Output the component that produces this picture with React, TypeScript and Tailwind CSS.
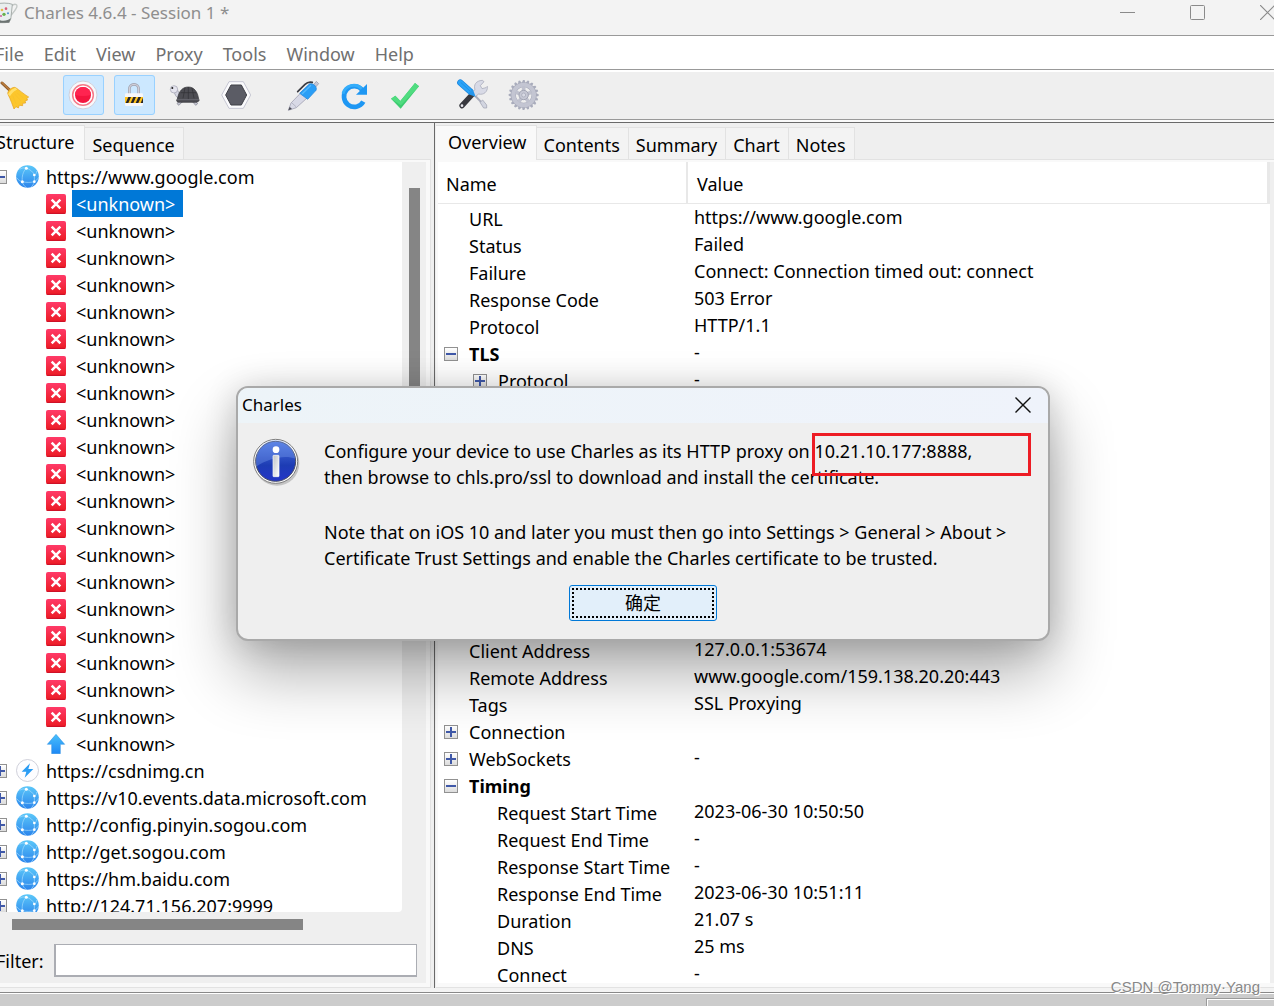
import { useState } from "react";
import type { ReactNode } from "react";
import clsx from "clsx";

const MENUS = ["File", "Edit", "View", "Proxy", "Tools", "Window", "Help"];

const HOSTS = [
  { url: "https://csdnimg.cn", icon: "bolt" },
  { url: "https://v10.events.data.microsoft.com", icon: "globe" },
  { url: "http://config.pinyin.sogou.com", icon: "globe" },
  { url: "http://get.sogou.com", icon: "globe" },
  { url: "https://hm.baidu.com", icon: "globe" },
  { url: "http://124.71.156.207:9999", icon: "globe" },
];

type Row = { name: string; value?: string; depth?: number; state?: "open" | "closed" };

const REQUEST_ROWS: Row[] = [
  { name: "URL", value: "https://www.google.com" },
  { name: "Status", value: "Failed" },
  { name: "Failure", value: "Connect: Connection timed out: connect" },
  { name: "Response Code", value: "503 Error" },
  { name: "Protocol", value: "HTTP/1.1" },
  { name: "TLS", value: "-", state: "open" },
  { name: "Protocol", value: "-", depth: 1, state: "closed" },
];

const CONNECTION_ROWS: Row[] = [
  { name: "Client Address", value: "127.0.0.1:53674" },
  { name: "Remote Address", value: "www.google.com/159.138.20.20:443" },
  { name: "Tags", value: "SSL Proxying" },
  { name: "Connection", state: "closed" },
  { name: "WebSockets", value: "-", state: "closed" },
  { name: "Timing", state: "open" },
  { name: "Request Start Time", value: "2023-06-30 10:50:50", depth: 1 },
  { name: "Request End Time", value: "-", depth: 1 },
  { name: "Response Start Time", value: "-", depth: 1 },
  { name: "Response End Time", value: "2023-06-30 10:51:11", depth: 1 },
  { name: "Duration", value: "21.07 s", depth: 1 },
  { name: "DNS", value: "25 ms", depth: 1 },
  { name: "Connect", value: "-", depth: 1 },
];

/* ---------- tree icons ---------- */

function Expander({ open }: { open?: boolean }) {
  return (
    <button
      aria-label={open ? "Collapse" : "Expand"}
      className="relative h-3.5 w-3.5 shrink-0 border border-[#919191] bg-gradient-to-b from-white to-[#dcdcdc]"
    >
      <svg viewBox="0 0 12 12" className="h-3 w-3" shapeRendering="crispEdges">
        <rect x="1" y="5" width="10" height="2" fill="#3f58a8" />
        {!open && <rect x="5" y="1" width="2" height="10" fill="#3f58a8" />}
      </svg>
    </button>
  );
}

function Globe() {
  return (
    <svg viewBox="0 0 69 69" className="h-[23px] w-[23px] shrink-0">
      <defs>
        <linearGradient id="globe" x1="0" y1="0" x2="0" y2="1">
          <stop offset="0" stopColor="#5cc8f9" />
          <stop offset="1" stopColor="#2b84ec" />
        </linearGradient>
      </defs>
      <circle cx="34.5" cy="34.5" r="34" fill="url(#globe)" />
      <g fill="none" stroke="#a9defc" strokeWidth="2">
        <path d="M31 9C21 20 17 34 19 50" />
        <path d="M31 9C42 13 52 21 55 30V50C53 58 49 63 44 67" />
        <path d="M19 50C30 53 44 53 55 50C60 47 65 43 68 37" />
        <path d="M19 50C12 48 6 44 2 38M19 50C21 58 26 65 32 68" />
        <path d="M31 9C24 8 16 9 11 13M55 30C60 27 62 24 62 18" />
      </g>
      <g fill="#fff">
        <circle cx="31" cy="10" r="4.5" />
        <circle cx="19" cy="50" r="4.5" />
        <circle cx="55" cy="30" r="4" />
        <circle cx="55" cy="50" r="4" />
      </g>
    </svg>
  );
}

function Bolt() {
  return (
    <svg viewBox="0 0 69 69" className="h-[23px] w-[23px] shrink-0">
      <circle cx="34.5" cy="34.5" r="33" fill="#fdfdff" stroke="#c6c8d2" strokeWidth="2.5" />
      <path d="M42 13L17 38H31L26 56L52 30H37Z" fill="#2b9df4" />
    </svg>
  );
}

function Failed() {
  return (
    <svg viewBox="0 0 60 60" className="h-5 w-5 shrink-0">
      <defs>
        <linearGradient id="failed" x1="0" y1="0" x2="0" y2="1">
          <stop offset="0" stopColor="#ff3a68" />
          <stop offset="1" stopColor="#ec1c24" />
        </linearGradient>
      </defs>
      <rect width="60" height="60" rx="6" fill="url(#failed)" />
      <path d="M2 58H58" stroke="#c8102a" strokeWidth="3" />
      <path d="M17 17L43 43M43 17L17 43" stroke="#fff" strokeWidth="7.5" />
    </svg>
  );
}

function Upload() {
  return (
    <svg viewBox="0 0 60 60" className="h-5 w-5 shrink-0">
      <defs>
        <linearGradient id="upload" x1="0" y1="0" x2="0" y2="1">
          <stop offset="0" stopColor="#49c0fb" />
          <stop offset="1" stopColor="#1e88f5" />
        </linearGradient>
      </defs>
      <path d="M30 1L56 31H43V59H17V31H4Z" fill="url(#upload)" stroke="#2a8fe0" strokeWidth="1.5" />
    </svg>
  );
}

/* ---------- toolbar icons, drawn on a 123 x 120 board ---------- */

function ToolIcon({ children }: { children: ReactNode }) {
  return (
    <svg viewBox="0 0 123 120" className="h-full w-full">
      {children}
    </svg>
  );
}

function ToolButton({ label, active, spaced, children }: { label: string; active?: boolean; spaced?: boolean; children: ReactNode }) {
  return (
    <button
      title={label}
      aria-label={label}
      className={clsx(
        "h-10 w-[41px] shrink-0 rounded-[3px]",
        active && "bg-[#cce8ff] outline outline-1 -outline-offset-1 outline-[#99d1ff]",
        spaced && "ml-4"
      )}
    >
      <ToolIcon>{children}</ToolIcon>
    </button>
  );
}

const GEAR_TEETH = Array.from({ length: 20 }, (_, i) => i * 18);

function Toolbar() {
  return (
    <div className="-ml-1 flex h-[47px] items-start gap-2.5 pt-[3px]" role="toolbar">
      <ToolButton label="Clear">
        <path d="M18 24L46 50" stroke="#8a5a2b" strokeWidth="9" strokeLinecap="round" />
        <path d="M18 23L46 49" stroke="#b87a3c" strokeWidth="5" strokeLinecap="round" />
        <path d="M36 58C31 50 50 33 59 38C69 44 84 58 98 66L92 71L95 75L87 78L89 84L80 85L80 92L70 91L67 99L60 95L54 102C50 92 44 74 36 58Z" fill="#fcc62c" stroke="#e5a01b" strokeWidth="2" />
        <path d="M36 58C40 49 50 40 59 38L64 44C56 46 46 55 42 64Z" fill="#ffdf6b" />
        <path d="M50 62L60 86M57 58L75 78M63 54L82 69" stroke="#f4ba2a" strokeWidth="1" />
      </ToolButton>
      <ToolButton label="Stop Recording" active spaced>
        <circle cx="60" cy="60" r="42" fill="#f8f8fb" stroke="#cfd0dc" strokeWidth="3" />
        <circle cx="60" cy="60" r="31" fill="#fff" stroke="#f57a88" strokeWidth="4.5" />
        <circle cx="60" cy="60" r="24" fill="#f4153f" />
        <path d="M60 36a24 24 0 0 1 24 24a90 90 0 0 1-48 0a24 24 0 0 1 24-24Z" fill="#ff2450" />
      </ToolButton>
      <ToolButton label="Stop SSL Proxying" active>
        <path d="M46 58V42a14 14 0 0 1 28 0V58" fill="none" stroke="#9fa0ad" strokeWidth="8" />
        <path d="M46 58V42a14 14 0 0 1 28 0V58" fill="none" stroke="#cfcfd9" strokeWidth="4" />
        <rect x="33" y="55" width="54" height="38" rx="4" fill="#f7f7fa" />
        <rect x="33" y="66" width="54" height="18" fill="#ffc21c" />
        <path d="M35 84L43 66H51L43 84ZM50 84L58 66H66L58 84ZM65 84L73 66H81L73 84ZM80 84L87 68V84Z" fill="#26262b" />
      </ToolButton>
      <ToolButton label="Start Throttling">
        <path d="M27 48C29 58 33 67 42 71L56 66L44 58L36 42Z" fill="#d5d6e2" stroke="#8e8f9f" strokeWidth="2" />
        <ellipse cx="27" cy="43" rx="11" ry="11" fill="#e4e4ee" stroke="#9d9dad" strokeWidth="2" />
        <circle cx="22" cy="39" r="3" fill="#222" />
        <path d="M44 76L36 86L42 91L48 84L56 78ZM88 76L98 86L92 91L86 84L80 78Z" fill="#c3c4d0" stroke="#7d7e8c" strokeWidth="2" />
        <path d="M37 72C42 48 52 36 70 36C87 36 98 50 101 72C106 79 96 82 90 82H46C38 82 31 79 37 72Z" fill="#4c4c52" stroke="#333338" strokeWidth="2" />
        <path d="M60 38L54 70M70 36V72M81 39L87 70M47 53H94" fill="none" stroke="#303035" strokeWidth="2" />
        <path d="M36 74H102" stroke="#67676f" strokeWidth="3" />
      </ToolButton>
      <ToolButton label="Enable Breakpoints">
        <path d="M17 60L39 20H82L104 60L82 100H39Z" fill="#fbfbfd" stroke="#c6c7d3" strokeWidth="3" />
        <path d="M29 60L45 30H76L92 60L76 90H45Z" fill="#5b5c65" stroke="#3f4047" strokeWidth="3" />
      </ToolButton>
      <ToolButton label="Compose" spaced>
        <path d="M16 106L24 84L54 53L72 69L40 98Z" fill="#d8d9e6" stroke="#a3a4b4" strokeWidth="2.5" />
        <path d="M16 106L20 95L27 102Z" fill="#4b4c55" />
        <path d="M27 84L40 96" stroke="#a3a4b4" strokeWidth="2" />
        <path d="M92 29L100 19L107 26L98 36Z" fill="#c7c8d6" stroke="#9192a2" strokeWidth="2" />
        <path d="M50 55L79 27C89 22 104 35 99 46L74 73Z" fill="#2a9ef6" stroke="#1b7fd6" strokeWidth="2" />
        <path d="M57 57L84 31" stroke="#55b9fd" strokeWidth="4" />
        <path d="M88 22C80 20 72 22 66 28L44 50" fill="none" stroke="#393a41" strokeWidth="5" strokeLinecap="round" />
      </ToolButton>
      <ToolButton label="Repeat">
        <path d="M85 45A31 31 0 1 0 88 80" fill="none" stroke="#1e97f3" strokeWidth="14" />
        <path d="M99 27V59H66Z" fill="#1e97f3" />
        <path d="M83 41A33 33 0 0 0 27 56" fill="none" stroke="#35adfa" strokeWidth="9" />
      </ToolButton>
      <ToolButton label="Validate">
        <path d="M18 71L31 62L46 78L90 24L102 34L47 101Z" fill="#3dcc70" />
        <path d="M18 71L31 62L46 78L90 24L102 34L48 91Z" fill="#50dc80" />
      </ToolButton>
      <ToolButton label="Tools" spaced>
        <path d="M67 60L97 91" stroke="#a9acbb" strokeWidth="6" />
        <path d="M84 82L92 75L104 90L104 99L95 99Z" fill="#d2d5e0" stroke="#9a9dad" strokeWidth="2" />
        <path d="M30 92L62 57" stroke="#38393f" strokeWidth="16" strokeLinecap="round" />
        <circle cx="30" cy="92" r="4" fill="#e8e8ee" />
        <path d="M58 52L69 44C64 30 72 17 91 16L96 20L85 32L90 41L102 38L106 34C108 50 95 61 80 57L70 65Z" fill="#d8dae6" stroke="#9fa1b2" strokeWidth="2" />
        <path d="M25 23L52 47" stroke="#1b84dd" strokeWidth="19" strokeLinecap="round" />
        <path d="M25 23L52 47" stroke="#2aa4f8" strokeWidth="15" strokeLinecap="round" />
        <path d="M47 57L62 41L71 65Z" fill="#2596ec" />
        <path d="M26 22L54 48" stroke="#1a84dc" strokeWidth="2" />
      </ToolButton>
      <ToolButton label="Settings">
        <g fill="#a9acbc">
          {GEAR_TEETH.map((a) => (
            <path key={a} d="M56 24L60 15H65L67 24Z" transform={`rotate(${a} 62 60)`} />
          ))}
        </g>
        <circle cx="62" cy="60" r="31" fill="none" stroke="#a8abba" strokeWidth="15" />
        <circle cx="62" cy="60" r="31" fill="none" stroke="#c3c5d2" strokeWidth="12" />
        <path d="M62 60V34M62 60L86 52M62 60L77 81M62 60L47 81M62 60L38 52" stroke="#bfc1ce" strokeWidth="11" />
        <circle cx="62" cy="60" r="14" fill="#c6c8d4" stroke="#a2a5b4" strokeWidth="3" />
        <circle cx="62" cy="60" r="6" fill="#d8dae4" stroke="#a2a5b4" strokeWidth="2" />
      </ToolButton>
    </div>
  );
}

/* ---------- window frame ---------- */

function TitleBar() {
  return (
    <header className="flex h-9 shrink-0 items-start border-b border-[#999] bg-[#f3f3f3] text-[#8e8e8e]">
      <svg viewBox="0 0 54 72" className="h-6 w-[18px] shrink-0">
        <path d="M34 18C46 8 56 14 48 26C44 34 38 40 33 46" fill="none" stroke="#c3c8c6" strokeWidth="4" />
        <path d="M-14 13C0 8 26 8 37 13L33 52C32 66 24 68 10 68H-6Z" fill="#e9eeee" stroke="#9aa19f" strokeWidth="2.5" />
        <path d="M-6 58C6 65 24 63 32 54L28 68H0Z" fill="#6c7371" />
        <circle cx="6" cy="30" r="4" fill="#e9b94a" />
        <circle cx="18" cy="26" r="4" fill="#d65f7c" />
        <circle cx="12" cy="43" r="5" fill="#67b04c" />
        <circle cx="24" cy="40" r="3" fill="#4d8fd0" />
        <circle cx="3" cy="48" r="3" fill="#cf5b9b" />
      </svg>
      <h1 className="ml-1.5 text-[17px] leading-[26px]">Charles 4.6.4 - Session 1 *</h1>
      <div className="-mr-px ml-auto flex h-[25px] items-center gap-[55px]">
        <button aria-label="Minimize">
          <svg viewBox="0 0 15 15" className="h-[15px] w-[15px]"><path d="M0 7.5H15" stroke="#8a8a8a" /></svg>
        </button>
        <button aria-label="Maximize">
          <svg viewBox="0 0 15 15" className="h-[15px] w-[15px]"><rect x="0.5" y="0.5" width="14" height="14" rx="1" fill="none" stroke="#8a8a8a" /></svg>
        </button>
        <button aria-label="Close">
          <svg viewBox="0 0 15 15" className="h-[15px] w-[15px]"><path d="M0 0L15 15M15 0L0 15" stroke="#8a8a8a" strokeWidth="1.2" /></svg>
        </button>
      </div>
    </header>
  );
}

function Tabs({ items, active, onSelect, first }: { items: string[]; active: string; onSelect: (t: string) => void; first: string }) {
  return (
    <div role="tablist" className="flex h-[37px] shrink-0 items-end border-b border-[#e2e2e2] bg-[#efefef]">
      {items.map((t) => (
        <button
          key={t}
          role="tab"
          aria-selected={t === active}
          onClick={() => onSelect(t)}
          className={clsx(
            "border-t border-r border-[#e2e2e2] whitespace-nowrap",
            t === active ? "-mb-px h-[35px] bg-[#f9f9f9] pb-0.5" : "h-8 bg-[#f3f3f3] pr-2 pl-[7px] pt-0.5",
            t === active && first
          )}
        >
          {t}
        </button>
      ))}
    </div>
  );
}

function StructurePane() {
  const [tab, setTab] = useState("Structure");
  const [selected, setSelected] = useState(0);

  return (
    <section className="flex w-[434px] shrink-0 flex-col border-t border-[#696969] pr-[3px]">
      <Tabs items={["Structure", "Sequence"]} active={tab} onSelect={setTab} first="-ml-1 pr-2.5" />
      <div className="flex min-h-0 flex-1 flex-col border-r border-b border-[#e2e2e2] bg-[#f9f9f9] pt-0.5 pr-1 pb-1">
        <div className="flex min-h-0 flex-1 flex-col bg-[#efefef]">
          <div className="flex min-h-0 flex-1">
            <ul className="min-h-0 flex-1 overflow-hidden rounded-br-sm bg-white pt-px">
              <li className="-ml-[7px] flex h-[27px] items-center">
                <Expander open />
                <span className="ml-[9px] flex items-center gap-[7px]">
                  <Globe />
                  https://www.google.com
                </span>
              </li>
              {Array.from({ length: 21 }, (_, i) => (
                <li key={i} className="flex h-[27px] items-center gap-1.5 pl-[46px]">
                  {i < 20 ? <Failed /> : <Upload />}
                  <button
                    onClick={() => setSelected(i)}
                    className={clsx("h-[27px] pr-2 pl-1 text-left", i === selected && "bg-[#0078d7] text-white")}
                  >
                    &lt;unknown&gt;
                  </button>
                </li>
              ))}
              {HOSTS.map((h) => (
                <li key={h.url} className="-ml-[7px] flex h-[27px] items-center">
                  <Expander />
                  <span className="ml-[9px] flex items-center gap-[7px] whitespace-nowrap">
                    {h.icon === "bolt" ? <Bolt /> : <Globe />}
                    {h.url}
                  </span>
                </li>
              ))}
            </ul>
            <div className="w-6 shrink-0 pt-[26px] pl-[7px]">
              <div className="h-[420px] w-[11px] bg-[#858585]" />
            </div>
          </div>
          <div className="h-8 shrink-0 pt-[7px] pl-3">
            <div className="h-[11px] w-[291px] bg-[#858585]" />
          </div>
          <div className="mb-1.5 -ml-1 flex shrink-0 items-center pr-[9px]">
            <label htmlFor="filter">Filter:</label>
            <input id="filter" className="ml-2.5 h-[33px] min-w-0 flex-1 border border-b-2 border-l-2 border-[#abadb3] bg-white px-1 outline-none" />
          </div>
        </div>
      </div>
    </section>
  );
}

function DetailRow({ row }: { row: Row }) {
  return (
    <tr className="h-[27px]">
      <td className="p-0">
        <div
          className={clsx(
            "flex h-[27px] items-center gap-[11px]",
            row.state && (row.depth ? "pl-[35px]" : "pl-1.5"),
            !row.state && (row.depth ? "pl-[59px]" : "pl-[31px]")
          )}
        >
          {row.state && <Expander open={row.state === "open"} />}
          <span className={clsx("whitespace-nowrap", row.state === "open" && "font-bold")}>{row.name}</span>
        </div>
      </td>
      <td className="p-0 pl-1.5 align-top leading-[25px]">{row.value}</td>
    </tr>
  );
}

function DetailPane() {
  const [tab, setTab] = useState("Overview");

  return (
    <section className="flex min-w-0 flex-1 flex-col border-t border-l border-[#696969] pl-px">
      <Tabs items={["Overview", "Contents", "Summary", "Chart", "Notes"]} active={tab} onSelect={setTab} first="pr-[9px] pl-3" />
      <div className="min-h-0 flex-1 border-b border-[#e2e2e2] bg-[#f9f9f9] pt-0.5 pb-1 pl-0.5">
        <div className="h-full overflow-hidden border-r-4 border-[#efefef] bg-white">
          <table className="w-full table-fixed border-separate border-spacing-0">
            <colgroup>
              <col className="w-[250px]" />
              <col />
            </colgroup>
            <thead>
              <tr className="h-[42px] text-left">
                <th className="border-r-2 border-b border-[#e8e8e8] p-0 pt-0.5 pl-2 font-normal">Name</th>
                <th className="border-r-3 border-b border-[#e8e8e8] p-0 pt-0.5 pl-[9px] font-normal">Value</th>
              </tr>
            </thead>
            <tbody>
              <tr className="h-px"><td colSpan={2} className="p-0" /></tr>
              {REQUEST_ROWS.map((r) => <DetailRow key={r.name + r.value} row={r} />)}
            </tbody>
            <tbody>
              <tr className="h-[243px]"><td colSpan={2} className="p-0" /></tr>
            </tbody>
            <tbody>
              {CONNECTION_ROWS.map((r) => <DetailRow key={r.name} row={r} />)}
            </tbody>
          </table>
        </div>
      </div>
    </section>
  );
}

function CharlesDialog({ onClose }: { onClose: () => void }) {
  return (
    <div
      role="dialog"
      aria-labelledby="dialog-title"
      className="absolute top-[386px] left-[236px] w-[814px] rounded-xl border-2 border-[#a9a9a9] bg-[#efefef] shadow-[0_32px_64px_rgba(0,0,0,0.32),0_2px_32px_rgba(0,0,0,0.16)]"
    >
      <div className="flex h-[35px] items-center justify-between rounded-t-[10px] bg-gradient-to-r from-[#edf4f8] to-[#eff3fb] pr-[17px] pb-0.5 pl-1">
        <h2 id="dialog-title" className="text-[17px]">Charles</h2>
        <button aria-label="Close" onClick={onClose}>
          <svg viewBox="0 0 16 16" className="h-4 w-4"><path d="M0.5 0.5L15.5 15.5M15.5 0.5L0.5 15.5" stroke="#111" strokeWidth="1.4" /></svg>
        </button>
      </div>
      <div className="flex pt-[15px] pl-[14px]">
        <svg viewBox="0 0 144 144" className="h-12 w-12 shrink-0">
          <defs>
            <linearGradient id="info" x1="0" y1="0" x2="0" y2="1">
              <stop offset="0" stopColor="#4b74e0" />
              <stop offset="0.6" stopColor="#1d3cb4" />
              <stop offset="1" stopColor="#2436c8" />
            </linearGradient>
            <linearGradient id="stem" x1="0" y1="0" x2="1" y2="1">
              <stop offset="0" stopColor="#bfc3c8" />
              <stop offset="1" stopColor="#fff" />
            </linearGradient>
          </defs>
          <circle cx="75" cy="76" r="67" fill="#000" opacity="0.18" />
          <circle cx="71" cy="70" r="66" fill="#fdfdfd" stroke="#7d7d7d" strokeWidth="3" />
          <circle cx="71" cy="70" r="60" fill="url(#info)" stroke="#4a4f66" strokeWidth="3" />
          <path d="M12 68A59 59 0 0 1 130 62C100 50 50 60 12 86Z" fill="#7fa2f2" opacity="0.35" />
          <circle cx="72" cy="35" r="10" fill="#fff" />
          <rect x="63" y="52" width="18" height="64" rx="2" fill="url(#stem)" stroke="#fff" strokeWidth="2" />
        </svg>
        <div className="ml-6 leading-[26px] whitespace-nowrap">
          <p>
            Configure your device to use Charles as its HTTP proxy on 10.21.10.177:8888,
            <br />
            then browse to chls.pro/ssl to download and install the certificate.
          </p>
          <p className="mt-[29px]">
            Note that on iOS 10 and later you must then go into Settings &gt; General &gt; About &gt;
            <br />
            Certificate Trust Settings and enable the Charles certificate to be trusted.
          </p>
        </div>
      </div>
      <div className="flex justify-center pt-3.5 pb-[18px]">
        <button onClick={onClose} className="h-9 w-[148px] rounded-[3px] border border-[#0078d7] bg-[#e2effa] p-0.5 text-lg leading-none">
          <span className="flex h-full items-center justify-center border-2 border-dotted border-black">确定</span>
        </button>
      </div>
      {/* highlight round the proxy address */}
      <div className="pointer-events-none absolute top-[45px] right-[17px] h-[43px] w-[219px] border-3 border-[#ed1c24]" />
    </div>
  );
}

export default function App() {
  const [dialogOpen, setDialogOpen] = useState(true);

  return (
    <div className="relative flex h-screen flex-col overflow-hidden bg-[#efefef] font-['Noto_Sans','Noto_Sans_CJK_SC',sans-serif] text-[18px] leading-[26px] text-black">
      <TitleBar />
      <nav className="-ml-[5px] flex h-[34px] shrink-0 items-center gap-5 border-b border-[#999] bg-white pt-0.5 text-[#707070]">
        {MENUS.map((m) => (
          <button key={m}>{m}</button>
        ))}
      </nav>
      <div className="shrink-0 border-t-2 border-b border-t-white border-b-[#999]">
        <Toolbar />
      </div>
      <div className="h-0.5 shrink-0 bg-[#fafafa]" />
      <main className="flex min-h-0 flex-1">
        <StructurePane />
        <DetailPane />
      </main>
      <div className="h-1 shrink-0 bg-[#f3f3f3]" />
      <footer className="flex h-3.5 shrink-0 justify-end border-t border-[#888] bg-[#ccc] pt-[5px] shadow-[inset_0_1px_0_#fff]">
        <div className="w-[68px] border-t border-l border-[#999] shadow-[inset_1px_1px_0_#fff]" />
      </footer>
      <span className="absolute right-3.5 bottom-1 font-['Liberation_Sans',sans-serif] text-[15px] leading-[30px] text-[#888] [text-shadow:1px_1px_0_#fff]">
        CSDN @Tommy·Yang
      </span>
      {dialogOpen && <CharlesDialog onClose={() => setDialogOpen(false)} />}
    </div>
  );
}
